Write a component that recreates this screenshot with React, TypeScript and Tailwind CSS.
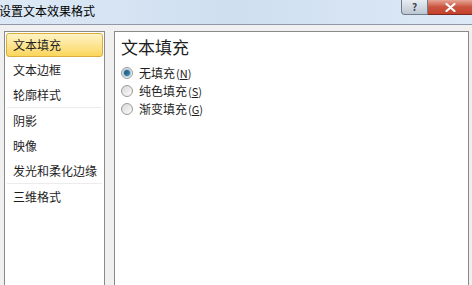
import { Fragment } from 'react'

const font = { fontFamily: '"Noto Sans CJK SC", "Noto Sans", sans-serif' }

interface NavItem {
  label: string
  selected?: boolean
  dividerAfter?: boolean
}

const navItems: NavItem[] = [
  { label: '文本填充', selected: true },
  { label: '文本边框' },
  { label: '轮廓样式', dividerAfter: true },
  { label: '阴影' },
  { label: '映像' },
  { label: '发光和柔化边缘', dividerAfter: true },
  { label: '三维格式' },
]

const fillOptions = [
  { label: '无填充', key: 'N', checked: true },
  { label: '纯色填充', key: 'S' },
  { label: '渐变填充', key: 'G' },
]

const Radio = ({ checked }: { checked?: boolean }) => (
  <span className="flex h-[12px] w-[12px] shrink-0 items-center justify-center rounded-full border border-[#9a9a9a] bg-gradient-to-br from-[#d8d8d8] to-[#fbfbfb]">
    {checked && (
      <span className="h-[6px] w-[6px] rounded-full bg-gradient-to-br from-[#1d4f6e] to-[#3f8cb8] ring-1 ring-[#9cc4dc]" />
    )}
  </span>
)

export default function App() {
  return (
    <div
      className="flex h-[285px] w-[472px] flex-col overflow-hidden bg-[#f0f0f0] text-[#1e1e1e]"
      style={font}
    >
      {/* Title bar */}
      <div className="flex h-[25px] shrink-0 items-start border-b border-[#8e9aa8] bg-gradient-to-r from-[#dce8f5] via-[#cfdff0] to-[#dde9f6]">
        <span className="-ml-[1px] mt-[3px] text-[12px] leading-[16px] text-black">
          设置文本效果格式
        </span>
        <div className="ml-auto flex h-[15px]">
          <div className="flex w-[27px] items-center justify-center rounded-bl-[4px] border border-t-0 border-[#6f7c8c] bg-gradient-to-b from-[#e9edf2] to-[#bcc6d2] text-[10px] font-bold leading-[12px] text-[#3d4654]">
            ?
          </div>
          <div className="flex w-[44px] items-center justify-center border-b border-[#7a2a22] bg-gradient-to-b from-[#e5a596] via-[#c9543f] to-[#c4412b]">
            <svg width="11" height="9" viewBox="0 0 11 9">
              <path d="M1.5 1 L9.5 8 M9.5 1 L1.5 8" stroke="#fff" strokeWidth="2.2" strokeLinecap="round" />
            </svg>
          </div>
        </div>
      </div>

      {/* Body */}
      <div className="flex flex-1 pl-[4px] pr-[3px] pt-[6px]">
        {/* Category list */}
        <div className="flex w-[101px] shrink-0 flex-col border border-b-0 border-[#8a8a8a] bg-white px-[1px] pt-[1px]">
          {navItems.map((item) => (
            <Fragment key={item.label}>
              <div
                className={
                  item.selected
                    ? 'flex h-[24px] items-center rounded-[3px] border border-[#d9ad3f] bg-gradient-to-b from-[#fff3c4] to-[#fbd659] pl-[6px] text-[12px]'
                    : 'flex h-[25px] items-center pl-[7px] text-[12px]'
                }
              >
                {item.label}
              </div>
              {item.dividerAfter && <div className="mx-[1px] h-px bg-[#ececec]" />}
            </Fragment>
          ))}
        </div>

        {/* Content panel */}
        <div className="ml-[9px] flex flex-1 flex-col border border-b-0 border-[#8a8a8a] bg-white pl-[6px] pt-[4px]">
          <h2 className="text-[17px] leading-[22px] text-[#1e1e1e]">文本填充</h2>
          <div className="mt-[6px] flex flex-col">
            {fillOptions.map((opt) => (
              <label key={opt.key} className="flex h-[18px] items-center gap-[6px] text-[12px]">
                <Radio checked={opt.checked} />
                <span className="leading-none">
                  {opt.label}
                  <span className="ml-[1px] text-[11px]">
                    (<span className="underline">{opt.key}</span>)
                  </span>
                </span>
              </label>
            ))}
          </div>
        </div>
      </div>
    </div>
  )
}
